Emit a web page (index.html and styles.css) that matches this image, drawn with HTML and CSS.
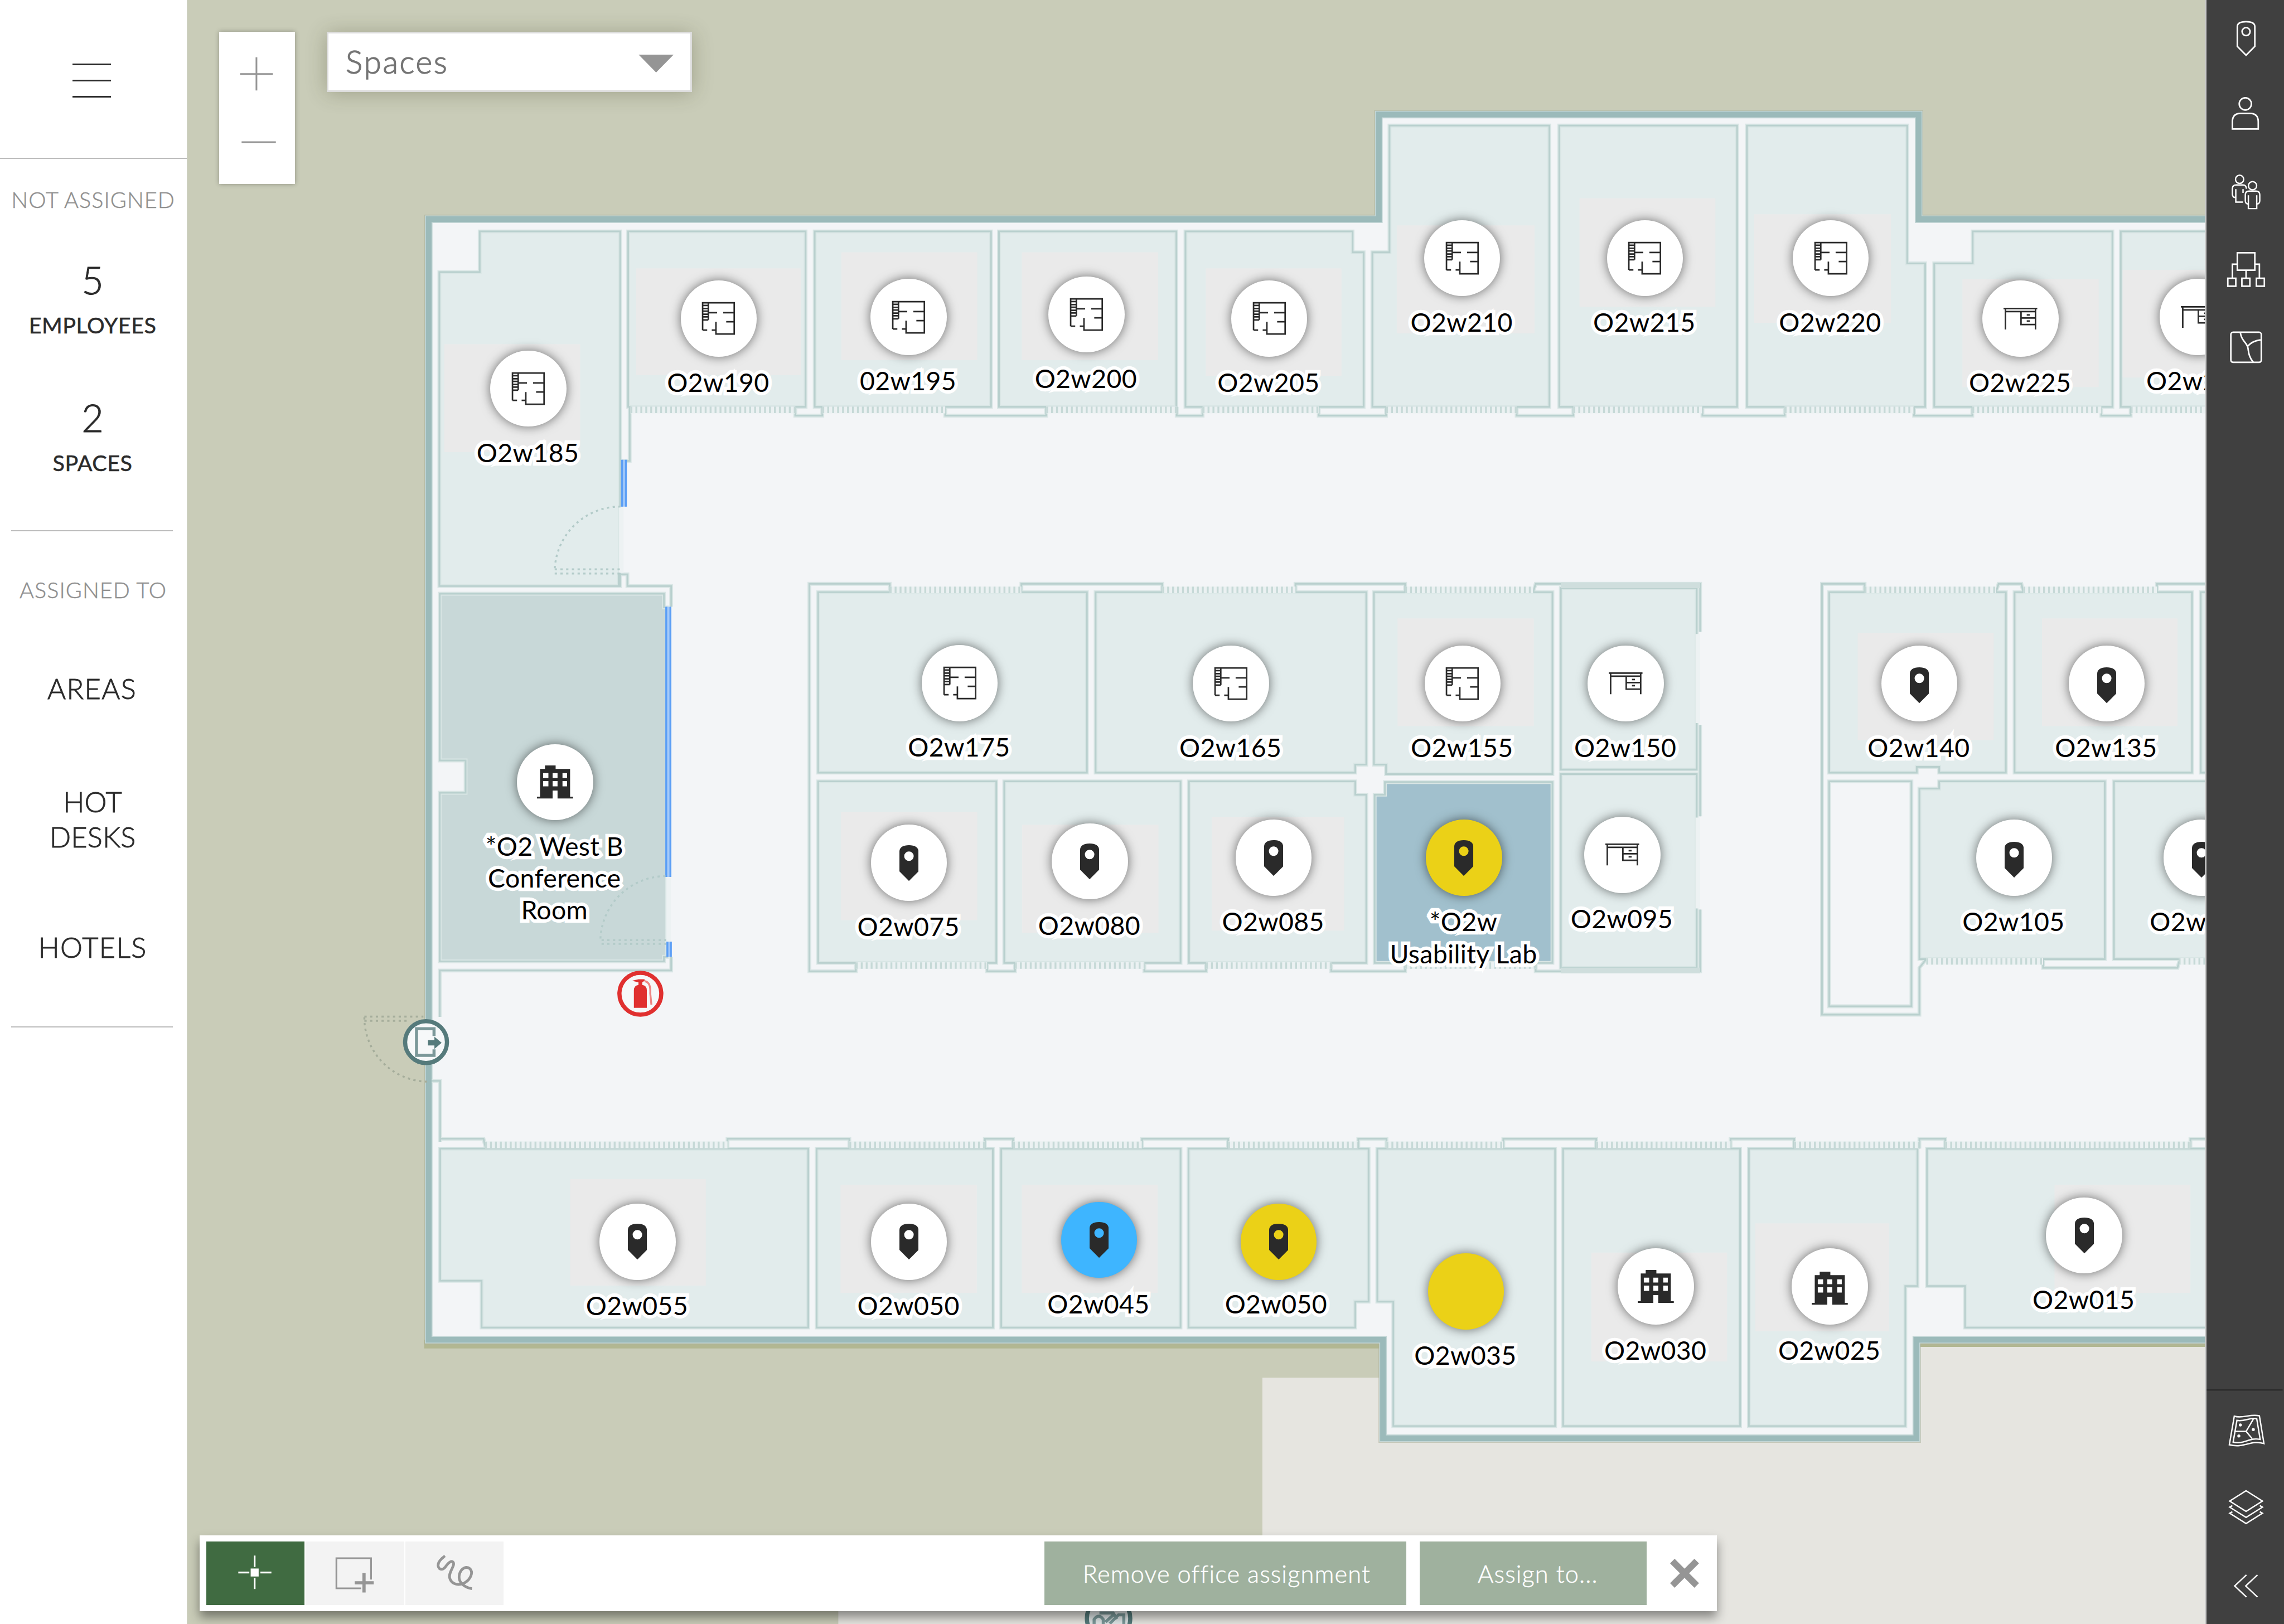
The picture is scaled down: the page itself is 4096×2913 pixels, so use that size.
FILE: index.html
```html
<!DOCTYPE html>
<html lang="en">
<head>
<meta charset="utf-8">
<title>Space assignment</title>
<link rel="stylesheet" href="styles.css">
</head>
<body>
<svg class="sprite" aria-hidden="true">
  <symbol id="i-plan" viewBox="-3 -3 89 88"><path d="M0 72V0H83V82H35V50M0 72H12M24 72H35M15 0V45M0 45H15M0 7H15M0 15H15M0 22H15M0 30H15M0 37H15M15 26H38M54 26H83M62 50H83"/></symbol>
  <symbol id="i-desk" viewBox="0 0 89 58"><path d="M0 2H89M3 10H86M5 2V58M84 2V58M46 10V44H84M46 27H84M61 19H69M61 35H69"/></symbol>
  <symbol id="i-pin" viewBox="0 0 50 94"><path fill-rule="evenodd" d="M0 17C0 6 9 0 25 0S50 6 50 17V69L25 94L0 69ZM25 16.500A12.500 12.500 0 1 0 25 41.500A12.500 12.500 0 1 0 25 16.500Z"/></symbol>
  <symbol id="i-building" viewBox="0 0 95 87"><path fill-rule="evenodd" d="M21 0H49V9H87V82H95V87H54V66H41V87H0V82H8V9H21ZM16 20V33H30V20ZM41 20V33H54V20ZM67 20V33H79V20ZM16 41V55H30V41ZM41 41V55H54V41ZM67 41V55H79V41Z"/></symbol>
</svg>

<div class="app">
  <aside class="sidebar">
    <button class="menu" aria-label="Menu"><span></span><span></span><span></span></button>
    <section class="panel panel-stats">
      <h2 class="heading">NOT ASSIGNED</h2>
      <div class="stat"><span class="count">5</span><span class="unit">EMPLOYEES</span></div>
      <div class="stat stat-next"><span class="count">2</span><span class="unit">SPACES</span></div>
    </section>
    <nav class="panel panel-nav">
      <h2 class="heading">ASSIGNED TO</h2>
      <a class="link link-areas">AREAS</a>
      <a class="link link-desks">HOT<br>DESKS</a>
      <a class="link link-hotels">HOTELS</a>
    </nav>
  </aside>

  <main class="map">
    <svg class="floor" viewBox="492 0 5304 4267" preserveAspectRatio="none">
      <defs>
        <g id="rooms">
          <path d="M1154 715H1260V608H1629V1540H1154Z"/>
          <path d="M1650 608H2116V1069H1650Z"/>
          <path d="M2140 608H2603V1069H2140Z"/>
          <path d="M2624 608H3090V1069H2624Z"/>
          <path d="M3114 608H3553V663H3582V1069H3114Z"/>
          <path d="M3605 663H3650V330H4070V1069H3605Z"/>
          <path d="M4096 330H4563V1069H4096Z"/>
          <path d="M4589 330H5010V692H5057V1069H4589Z"/>
          <path d="M5081 692H5182V608H5549V1069H5081Z"/>
          <path d="M5571 608H5900V1069H5571Z"/>
          <path d="M2149 1556H2855V2030H2149Z"/>
          <path d="M2878 1556H3589V2009H3560V2030H2878Z"/>
          <path d="M3609 1556H4078V2034H3641V2009H3609Z"/>
          <path d="M4100 1545H4457V2022H4100Z"/>
          <path d="M2149 2053H2617V2530H2149Z"/>
          <path d="M2638 2053H3101V2530H2638Z"/>
          <path d="M3123 2053H3560V2088H3589V2530H3123Z"/>
          <path d="M4100 2034H4457V2543H4100Z"/>
          <path d="M4805 1556H5269V2030H5094V2015H5035V2030H4805Z"/>
          <path d="M5292 1556H5758V2030H5292Z"/>
          <path d="M5781 1556H5900V2030H5781Z"/>
          <path d="M5042 2072H5094V2053H5529V2520H5042Z"/>
          <path d="M5553 2053H5900V2520H5553Z"/>
          <path d="M1156 3018H2123V3488H1265V3365H1156Z"/>
          <path d="M2145 3018H2608V3488H2145Z"/>
          <path d="M2630 3018H3101V3488H2630Z"/>
          <path d="M3122 3018H3595V3420H3560V3488H3122Z"/>
          <path d="M3618 3018H4085V3747H3660V3420H3618Z"/>
          <path d="M4106 3018H4571V3747H4106Z"/>
          <path d="M4594 3018H5037V3379H5005V3747H4594Z"/>
          <path d="M5062 3018H5900V3488H5162V3379H5062Z"/>
        </g>
        <path id="conference" d="M1155 1560H1744V1596H1752V2514H1744V2526H1155V2083H1223V1998H1155Z"/>
        <path id="lab" d="M3638 2055H4078V2530H3611V2088H3638Z"/>
        <path id="shell" d="M1126 576H3622V301H5040V576H6000V3520H5034V3779H3633V3520H1126Z"/>
        <path id="doors" d="M1656 1077H2089M2160 1077H2483M2748 1077H3091M3159 1077H3464M3641 1077H3984M4133 1077H4472M4688 1077H5028M5181 1077H5520M5597 1077H5800M2337 1550H2683M3053 1550H3403M3691 1550H4027M4898 1550H5243M5315 1550H5666M2248 2537H2593M2666 2537H3006M3168 2537H3497M3691 2537H4034M5060 2526H5367M5723 2526H5800M1274 3008H1911M2231 3008H2587M2661 3008H3000M3226 3008H3568M3642 3008H3949M4193 3008H4546M4713 3008H5042M5110 3008H5754"/>
        <g id="jambs">
          <path d="M2089 1069V1092H2160V1069M2483 1069V1092H2748V1069M3091 1069V1092H3159V1069M3464 1069V1092H3641V1069M3984 1069V1092H4133V1069M4472 1069V1092H4688V1069M5028 1069V1092H5181V1069M5520 1069V1092H5597V1069"/>
          <path d="M2337 1556V1534H2126V2552H2248V2531M2683 1556V1534H3053V1556M3403 1556V1534H3691V1556M4027 1556L4034 1534H4466V1660M4466 1905V2145M4466 2390V2552H4034V2531M2593 2531V2552H2666V2531M3006 2531V2552H3168V2531M3497 2531V2552H3691V2531"/>
          <path d="M4898 1556V1534H4786V2666H5042V2543L5060 2520M5243 1556L5250 1534H5310L5315 1556M5666 1556V1534H5800M5367 2520V2543H5720L5726 2520"/>
          <path d="M4805 2053H5021V2644H4805Z"/>
          <path d="M1156 3000V2840H1134M1156 2992H1270L1276 3018M1911 3018V2992H2231V3018M2587 3018V2992H2661V3018M3000 3018V2992H3226V3018M3568 3018V2992H3642V3018M3949 3018V2992H4193V3018M4546 3018V2992H4713V3018M5042 3018V2992H5110V3018M5754 3018V2992H5800"/>
          <path d="M1654 1069V1211H1629M1625 1540V1509H1648V1540H1763V1594M1763 2514V2550H1155V2672"/>
        </g>
      </defs>
      <path class="yard" d="M3316 3620H3640V3530H6000V4267H2202V4150H3316Z"/>
      <path class="shade" d="M1114 3520H3627V3543H1114ZM5040 3520H5800V3539H5040Z"/>
      <use href="#shell" class="shell-shadow"/>
      <use href="#shell" class="shell-wall"/>
      <use href="#shell" class="shell-floor"/>
      <use href="#rooms" class="room edge-soft"/>
      <use href="#conference" class="room-conference edge-soft"/>
      <use href="#lab" class="room-lab edge-soft"/>
      <g class="no-fill">
        <use href="#jambs" class="edge-soft"/>
        <use href="#rooms" class="edge-fine"/>
        <use href="#conference" class="edge-fine"/>
        <use href="#lab" class="edge-fine"/>
        <use href="#jambs" class="edge-fine"/>
      </g>
      <path class="thick-wall" d="M4100 1538H4466M4100 2550H4466"/>
      <path class="opening" d="M1632 1331V1505M1756 2304V2474M4460 1666V1900M4460 2148V2387"/>
      <use href="#doors" class="door-base"/>
      <use href="#doors" class="door-hatch"/>

      <g class="pads">
        <path d="M1167 904h357v284h-357zM1671 705h433v281h-433zM2210 663h357v283h-357zM2684 663h358v283h-358zM3167 705h357v283h-357zM3669 592h362v284h-362zM4149 521h357v285h-357zM4608 563h359v285h-359zM5155 734h358v283h-358zM5576 709h224v283h-224z"/>
        <path d="M3671 1625h358v283h-358zM4880 1663h357v282h-357zM5364 1625h356v283h-356zM2209 2134h358v284h-358zM2685 2167h358v284h-358zM3183 2146h348v299h-348z"/>
        <path d="M1498 3098h356v280h-356zM2208 3113h358v284h-358zM2684 3113h357v284h-357zM4180 3291h357v286h-357zM4611 3214h351v284h-351zM5397 3113h357v284h-357z"/>
      </g>

      <path class="window" d="M1631 1208H1646V1331H1631ZM1748 1594H1763V2304H1748ZM1751 2474H1765V2514H1751Z"/>
      <path class="window-edge" d="M1634 1208V1331M1644 1208V1331M1750 1594V2304M1761 1594V2304M1753 2474V2514M1762 2474V2514"/>
      <path class="swing" d="M1630 1331A172 172 0 0 0 1457 1500M1457 1496H1636M1457 1507H1636M1748 2302A172 172 0 0 0 1577 2474M1580 2470H1750M1580 2480H1750"/>
      <path class="swing swing-out" d="M957 2671H1112M957 2682H1075M957 2673A168 168 0 0 0 1125 2842"/>

      <g class="sign sign-exit">
        <circle cx="1119" cy="2738" r="55"/>
        <path d="M1140 2722V2703H1094V2773H1140V2757"/>
        <path class="solid" d="M1124 2733H1141V2724L1160 2740L1141 2756V2747H1124Z"/>
      </g>
      <g class="sign sign-fire">
        <circle cx="1682" cy="2611" r="55"/>
        <path class="solid" d="M1665 2648V2602Q1665 2590 1677 2588V2581L1660 2577L1677 2573H1693V2577L1687 2581V2588Q1699 2590 1699 2602V2648Z"/>
        <path d="M1693 2578Q1710 2580 1708 2610L1711 2640" class="hose"/>
      </g>
      <g class="sign sign-exit sign-meeting">
        <circle cx="2912" cy="4252" r="57"/>
        <path d="M2874 4267V4255Q2886 4238 2898 4255V4267M2888 4238H2924L2934 4254M2915 4266L2938 4243H2952V4267M2904 4262L2928 4240"/>
      </g>
    </svg>

    <div class="pins">
      <div class="pin" style="--x:1388;--y:1021"><span class="dot"><svg class="plan"><use href="#i-plan"/></svg></span><span class="name">O2w185</span></div>
      <div class="pin" style="--x:1888;--y:837"><span class="dot"><svg class="plan"><use href="#i-plan"/></svg></span><span class="name">O2w190</span></div>
      <div class="pin" style="--x:2387;--y:833"><span class="dot"><svg class="plan"><use href="#i-plan"/></svg></span><span class="name">02w195</span></div>
      <div class="pin" style="--x:2854;--y:826"><span class="dot"><svg class="plan"><use href="#i-plan"/></svg></span><span class="name">O2w200</span></div>
      <div class="pin" style="--x:3334;--y:837"><span class="dot"><svg class="plan"><use href="#i-plan"/></svg></span><span class="name">O2w205</span></div>
      <div class="pin" style="--x:3841;--y:678"><span class="dot"><svg class="plan"><use href="#i-plan"/></svg></span><span class="name">O2w210</span></div>
      <div class="pin" style="--x:4321;--y:678"><span class="dot"><svg class="plan"><use href="#i-plan"/></svg></span><span class="name">O2w215</span></div>
      <div class="pin" style="--x:4809;--y:678"><span class="dot"><svg class="plan"><use href="#i-plan"/></svg></span><span class="name">O2w220</span></div>
      <div class="pin" style="--x:5308;--y:837"><span class="dot"><svg class="desk"><use href="#i-desk"/></svg></span><span class="name">O2w225</span></div>
      <div class="pin" style="--x:5774;--y:833"><span class="dot"><svg class="desk"><use href="#i-desk"/></svg></span><span class="name">O2w230</span></div>

      <div class="pin" style="--x:2521;--y:1795"><span class="dot"><svg class="plan"><use href="#i-plan"/></svg></span><span class="name">O2w175</span></div>
      <div class="pin" style="--x:3234;--y:1796"><span class="dot"><svg class="plan"><use href="#i-plan"/></svg></span><span class="name">O2w165</span></div>
      <div class="pin" style="--x:3842;--y:1796"><span class="dot"><svg class="plan"><use href="#i-plan"/></svg></span><span class="name">O2w155</span></div>
      <div class="pin" style="--x:4271;--y:1796"><span class="dot"><svg class="desk"><use href="#i-desk"/></svg></span><span class="name">O2w150</span></div>
      <div class="pin" style="--x:5042;--y:1796"><span class="dot"><svg class="tag low"><use href="#i-pin"/></svg></span><span class="name">O2w140</span></div>
      <div class="pin" style="--x:5534;--y:1796"><span class="dot"><svg class="tag low"><use href="#i-pin"/></svg></span><span class="name">O2w135</span></div>

      <div class="pin" style="--x:1458;--y:2055"><span class="dot"><svg class="building"><use href="#i-building"/></svg></span><span class="name">*O2 West B<br>Conference<br>Room</span></div>
      <div class="pin" style="--x:2388;--y:2267"><span class="dot"><svg class="tag"><use href="#i-pin"/></svg></span><span class="name">O2w075</span></div>
      <div class="pin" style="--x:2863;--y:2263"><span class="dot"><svg class="tag"><use href="#i-pin"/></svg></span><span class="name">O2w080</span></div>
      <div class="pin" style="--x:3346;--y:2254"><span class="dot"><svg class="tag"><use href="#i-pin"/></svg></span><span class="name">O2w085</span></div>
      <div class="pin" style="--x:3846;--y:2254"><span class="dot yellow"><svg class="tag"><use href="#i-pin"/></svg></span><span class="name">*O2w<br>Usability Lab</span></div>
      <div class="pin" style="--x:4262;--y:2246"><span class="dot"><svg class="desk"><use href="#i-desk"/></svg></span><span class="name">O2w095</span></div>
      <div class="pin" style="--x:5291;--y:2254"><span class="dot"><svg class="tag low"><use href="#i-pin"/></svg></span><span class="name">O2w105</span></div>
      <div class="pin" style="--x:5783;--y:2254"><span class="dot"><svg class="tag low"><use href="#i-pin"/></svg></span><span class="name">O2w110</span></div>

      <div class="pin" style="--x:1675;--y:3263"><span class="dot"><svg class="tag"><use href="#i-pin"/></svg></span><span class="name">O2w055</span></div>
      <div class="pin" style="--x:2388;--y:3263"><span class="dot"><svg class="tag"><use href="#i-pin"/></svg></span><span class="name">O2w050</span></div>
      <div class="pin" style="--x:2887;--y:3258"><span class="dot blue"><svg class="tag"><use href="#i-pin"/></svg></span><span class="name">O2w045</span></div>
      <div class="pin" style="--x:3359;--y:3263"><span class="dot yellow"><svg class="tag"><use href="#i-pin"/></svg></span><span class="name raised">O2w050</span></div>
      <div class="pin" style="--x:3851;--y:3393"><span class="dot yellow"></span><span class="name">O2w035</span></div>
      <div class="pin" style="--x:4350;--y:3380"><span class="dot"><svg class="building"><use href="#i-building"/></svg></span><span class="name">O2w030</span></div>
      <div class="pin" style="--x:4807;--y:3380"><span class="dot"><svg class="building low"><use href="#i-building"/></svg></span><span class="name">O2w025</span></div>
      <div class="pin" style="--x:5475;--y:3246"><span class="dot"><svg class="tag"><use href="#i-pin"/></svg></span><span class="name">O2w015</span></div>
    </div>

    <div class="zoom">
      <svg viewBox="575 83 200 400"><path d="M630 194H716M673 150V237M634 373H724"/></svg>
    </div>

    <div class="select"><span>Spaces</span><i class="caret"></i></div>

    <div class="toolbar">
      <div class="tools">
        <button class="tool active" aria-label="Pick"><svg viewBox="542 4050 258 167"><path d="M669 4087V4117M669 4146V4175M626 4131.500H655M684 4131.500H713"/><rect x="658.500" y="4121" width="21" height="21"/></svg></button>
        <button class="tool" aria-label="Select area"><svg viewBox="804 4050 258 167"><path d="M950 4173H885V4094H976V4150"/><path class="bold" d="M957.500 4133V4184M933 4158.500H983"/></svg></button>
        <button class="tool" aria-label="Lasso"><svg viewBox="1065 4050 258 167"><path class="scribble" d="M1169 4088C1158 4096 1150 4106 1151 4114C1153 4125 1163 4126 1170 4117C1177 4107 1186 4098 1191 4105C1196 4115 1176 4132 1182 4148C1188 4164 1206 4166 1220 4159C1236 4150 1244 4132 1235 4122C1226 4114 1212 4119 1207 4136C1202 4156 1218 4170 1240 4174"/></svg></button>
      </div>
      <div class="actions">
        <button class="action action-remove">Remove office assignment</button>
        <button class="action action-assign">Assign to...</button>
        <button class="close" aria-label="Close"><svg viewBox="0 0 76 76"><path d="M6 6L70 70M70 6L6 70"/></svg></button>
      </div>
    </div>
  </main>

  <aside class="rail">
    <svg viewBox="5796 0 204 4267" preserveAspectRatio="none">
      <path d="M5877 70C5877 60 5886 57 5900 57S5923 60 5923 70V122L5900 145L5877 122Z"/><circle cx="5900" cy="83" r="10.500"/>
      <circle cx="5898" cy="273" r="16"/><path d="M5864 339V320Q5864 298 5886 298H5910Q5932 298 5932 320V339Z"/>
      <g class="thin"><circle cx="5883" cy="471" r="10.800"/><path d="M5873 519Q5864 519 5864 510V496Q5864 486 5874 486H5892Q5900 486 5901 496M5873 497V531H5892M5892 497V507"/>
      <circle cx="5917" cy="488" r="10.800"/><path d="M5906 536Q5898 536 5898 527V512Q5898 502 5908 502H5926Q5936 502 5936 512V527Q5936 536 5928 536M5906 513V548H5928V513"/></g>
      <path d="M5877 664H5923V710H5877ZM5852 731H5873V752H5852ZM5889 731H5910V752H5889ZM5927 731H5948V752H5927ZM5900 710V731M5877 694H5864V731M5923 694H5935V731"/>
      <rect x="5860" y="873" width="80" height="79" rx="6"/><path d="M5885 874C5887 896 5903 900 5905 915C5907 930 5909 940 5919 952M5903 911Q5915 896 5938 893"/>
      <path class="rule" d="M5796 3652H5996"/>
      <path class="thin" d="M5869 3721C5891 3728 5911 3714 5935 3720L5947 3793C5912 3782 5897 3806 5856 3796ZM5876 3732C5896 3736 5910 3723 5928 3728L5937 3782C5908 3776 5896 3796 5866 3789ZM5872 3761H5900L5919 3729M5900 3761L5916 3780"/>
      <path class="dots" d="M5881 3744a4 4 0 1 0 8 0a4 4 0 1 0-8 0M5915 3756a4 4 0 1 0 8 0a4 4 0 1 0-8 0M5877 3773a4 4 0 1 0 8 0a4 4 0 1 0-8 0"/>
      <path class="thin" d="M5900 3917L5943 3944L5900 3971L5857 3944ZM5864 3956L5857 3960L5900 3987L5943 3960L5936 3956M5864 3972L5857 3976L5900 4003L5943 3976L5936 3972"/>
      <path class="thin" d="M5901 4138L5870 4167L5901 4196M5930 4138L5899 4167L5930 4196"/>
    </svg>
  </aside>
</div>
</body>
</html>
```

FILE: styles.css
```css
/* 1rem stands for 100 design units */
html { font-size: 68.26667px; }
* { box-sizing: border-box; }
body { margin: 0; font-family: Lato, "Open Sans", sans-serif; background: #c9ccb8; overflow: hidden; }
button { margin: 0; padding: 0; border: 0; background: none; font: inherit; color: inherit; }
h2 { margin: 0; font-weight: inherit; }
.sprite { position: absolute; width: 0; height: 0; }

.app { display: grid; grid-template-columns: 4.92rem 1fr 2.04rem; width: 100vw; height: 100vh; }

/* sidebar */
.sidebar { display: flex; flex-direction: column; background: #fff; border-right: 0.02rem solid #d5d6d2; color: #2b2b2b; text-align: center; white-space: nowrap; }
.menu { flex: none; display: flex; flex-direction: column; gap: 0.375rem; height: 4.18rem; padding: 1.665rem 0 0 1.91rem; border-bottom: 0.03rem solid #bcbcbc; }
.menu span { width: 1.01rem; height: 0.05rem; background: #2b2b2b; }
.panel { display: flex; flex-direction: column; align-items: center; margin: 0 0.36rem 0 0.29rem; border-bottom: 0.03rem solid #bcbcbc; }
.panel-stats { height: 9.78rem; padding-top: 0.77rem; }
.panel-nav { height: 13.04rem; padding-top: 1.24rem; }
.heading { margin-left: 0.06rem; font-size: 0.58rem; line-height: 0.6rem; font-weight: 300; color: #8f8f8f; letter-spacing: 0.015rem; -webkit-text-stroke: 0.008rem currentColor; }
.stat { display: flex; flex-direction: column; align-items: center; gap: 0.39rem; margin-top: 1.31rem; margin-left: 0.03rem; }
.stat-next { margin-top: 1.63rem; }
.count { font-size: 1rem; line-height: 1rem; font-weight: 300; -webkit-text-stroke: 0.015rem currentColor; }
.unit { font-size: 0.58rem; line-height: 0.6rem; letter-spacing: 0.007rem; -webkit-text-stroke: 0.008rem currentColor; }
.link { font-size: 0.74rem; line-height: 0.925rem; font-weight: 300; letter-spacing: 0.02rem; -webkit-text-stroke: 0.014rem currentColor; }
.link-areas { margin-top: 1.82rem; }
.link-desks { margin: 2.05rem 0 0 0.03rem; letter-spacing: 0.003rem; }
.link-hotels { margin: 1.97rem 0 0 0.03rem; }

/* map */
.map { position: relative; overflow: hidden; background: #c9ccb8; }
.floor { display: block; width: 100%; height: 100%; }
.yard { fill: #e6e5e0; }
.shade { fill: #b2b792; }
.shell-shadow { fill: none; stroke: #a9ae98; stroke-width: 24; opacity: .55; }
.shell-wall { fill: #f3f5f7; stroke: #c3d6d6; stroke-width: 20; }
.shell-floor { fill: none; stroke: #9bbaba; stroke-width: 15; }
.room { fill: #e2ecec; }
.room-conference { fill: #c8d8d8; }
.room-lab { fill: #a1c0cd; }
.no-fill { fill: none; }
.edge-soft { stroke: #d9e6e5; stroke-width: 10; }
.edge-fine { stroke: #b9d0ce; stroke-width: 4.500; }
.thick-wall { stroke: #cfdedd; stroke-width: 15; }
.opening { stroke: #edf2f3; stroke-width: 12; }
.door-base { stroke: #ebf1f2; stroke-width: 18; }
.door-hatch { stroke: #c6d9d7; stroke-width: 17; stroke-dasharray: 5 8; }
.pads { fill: #eaeaea; }
.window { fill: #a5cafa; }
.window-edge { fill: none; stroke: #5c9ff5; stroke-width: 5; }
.swing { fill: none; stroke: #b3cbc9; stroke-width: 5; stroke-dasharray: 6 9; }
.swing-out { stroke: #a5ad9b; }
.sign circle { fill: #f6f8f9; stroke-width: 11; }
.sign path { fill: none; stroke-width: 8; }
.sign .solid { stroke: none; }
.sign-exit { stroke: #557a7b; }
.sign-exit path { stroke: #7b9899; }
.sign-exit .solid { fill: #557a7b; }
.sign-meeting circle { fill: #dfe5e6; }
.sign-fire { stroke: #e0302f; }
.sign-fire .solid { fill: #e0302f; }
.sign-fire .hose { stroke: #ee8583; stroke-width: 5; }

/* pins */
.pins { position: absolute; inset: 0; }
.pin { position: absolute; left: calc((var(--x) - 492) * 0.01rem); top: calc(var(--y) * 0.01rem - 1rem); display: flex; flex-direction: column; align-items: center; width: 6rem; margin-left: -3rem; }
.dot { display: flex; align-items: center; justify-content: center; width: 2rem; height: 2rem; border-radius: 50%; background: #fff; box-shadow: 0 0 0.28rem rgba(0, 0, 0, .55); fill: #2a2a2a; }
.dot.yellow { background: #ebd117; }
.dot.blue { background: #3eb5ff; }
.plan { width: 0.89rem; height: 0.88rem; fill: none; stroke: #2a2a2a; stroke-width: 4; }
.desk { width: 0.89rem; height: 0.58rem; fill: none; stroke: #2a2a2a; stroke-width: 4; }
.tag { width: 0.5rem; height: 0.94rem; }
.building { width: 0.95rem; height: 0.87rem; }
.low { margin-top: 0.1rem; }
.name { margin: 0.255rem 0.03rem 0 0; font-size: 0.68rem; line-height: 0.84rem; color: #000; text-align: center; white-space: nowrap; -webkit-text-stroke: 0.18rem #fff; paint-order: stroke fill; stroke-linejoin: round; letter-spacing: 0.005rem; }
.name.raised { margin-top: 0.215rem; margin-right: 0.14rem; }

/* map controls */
.zoom { position: absolute; left: 0.83rem; top: 0.83rem; width: 2rem; height: 4rem; background: #fff; box-shadow: 0 0 0.12rem rgba(0, 0, 0, .3); }
.zoom svg { display: block; width: 100%; height: 100%; fill: none; stroke: #959595; stroke-width: 4.500; }
.select { position: absolute; left: 3.66rem; top: 0.83rem; display: flex; align-items: center; justify-content: space-between; width: 9.6rem; height: 1.58rem; padding: 0 0.44rem 0.02rem 0.46rem; border: 0.05rem solid #dcdcdc; background: #fff; box-shadow: 0 0.04rem 0.5rem rgba(60, 60, 30, .3); color: #757575; font-size: 0.83rem; font-weight: 300; letter-spacing: 0.04rem; -webkit-text-stroke: 0.02rem currentColor; }
.caret { width: 0.92rem; height: 0.47rem; margin-top: 0.12rem; background: #959595; clip-path: polygon(0 0, 100% 0, 50% 100%); }

/* toolbar */
.toolbar { position: absolute; left: 0.33rem; top: 40.34rem; display: flex; justify-content: space-between; align-items: center; width: 39.86rem; height: 1.99rem; padding: 0 0.48rem 0 0.17rem; background: #fff; box-shadow: 0 0.16rem 0.26rem rgba(0, 0, 0, .42); }
.toolbar::before { content: ""; position: absolute; z-index: -1; left: 0; bottom: 0; width: 2rem; height: 1rem; box-shadow: 0 0.14rem 0.18rem rgba(0, 0, 0, .4); }
.tools { display: flex; gap: 0.035rem; }
.tool { width: 2.58rem; height: 1.67rem; background: #f3f3f3; }
.tool svg { display: block; width: 100%; height: 100%; fill: none; stroke: #959595; stroke-width: 4.500; }
.tool .bold { stroke-width: 8.500; }
.tool .scribble { stroke-width: 7; }
.tool.active { background: #406b41; }
.tool.active svg { stroke: #fff; }
.tool.active rect { fill: #fff; stroke: none; }
.actions { display: flex; align-items: center; }
.action { height: 1.67rem; background: #9fb19e; color: #fff; font-size: 0.635rem; font-weight: 300; letter-spacing: 0.017rem; white-space: nowrap; -webkit-text-stroke: 0.008rem currentColor; }
.action-remove { width: 9.51rem; margin-right: 0.35rem; padding-left: 0.08rem; }
.action-assign { width: 5.96rem; margin-right: 0.62rem; padding-left: 0.26rem; }
.close { width: 0.76rem; height: 0.76rem; }
.close svg { display: block; width: 100%; height: 100%; stroke: #959595; stroke-width: 17; }

/* right rail */
.rail { position: relative; background: #404040; box-shadow: -0.04rem 0 0 #c9c9c9; }
.rail svg { display: block; width: 100%; height: 100%; fill: none; stroke: #fff; stroke-width: 4; }
.rail .thin { stroke-width: 3.600; }
.rail .rule { stroke: #2c2c2c; }
.rail .dots { fill: #fff; stroke: none; }
```
